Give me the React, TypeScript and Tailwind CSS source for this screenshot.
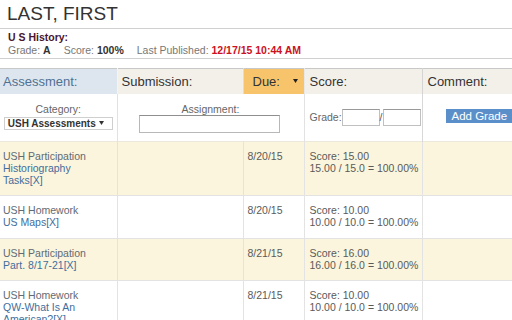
import React from "react";

const rows = [
  { cat: "USH Participation", name: ["Historiography", "Tasks[X]"], due: "8/20/15", score: "15.00", calc: "15.00 / 15.0 = 100.00%", bg: "bg-[#faf5dc]", h: "h-[54px]" },
  { cat: "USH Homework", name: ["US Maps[X]"], due: "8/20/15", score: "10.00", calc: "10.00 / 10.0 = 100.00%", bg: "bg-white", h: "h-[43px]" },
  { cat: "USH Participation", name: ["Part. 8/17-21[X]"], due: "8/21/15", score: "16.00", calc: "16.00 / 16.0 = 100.00%", bg: "bg-[#faf5dc]", h: "h-[42px]" },
  { cat: "USH Homework", name: ["QW-What Is An", "American?[X]"], due: "8/21/15", score: "10.00", calc: "10.00 / 10.0 = 100.00%", bg: "bg-white", h: "h-[54px]" },
];

export default function App() {
  return (
    <div className="w-[512px] h-[320px] overflow-hidden bg-white font-['Liberation_Sans',Arial,sans-serif]">
      <div className="pl-[7px] pt-[3px] pb-[3px] border-b border-[#d0d0d0] text-[19px] leading-[22px] text-[#333]">
        LAST, FIRST
      </div>
      <div className="pl-[8px] pt-[2px] pb-[1px] border-b border-[#d0d0d0] text-[10.5px] leading-[13px]">
        <div className="font-bold text-[#4a1530]">U S History:</div>
        <div className="flex gap-[13px] text-[#777]">
          <span>
            Grade: <b className="text-[#333]">A</b>
          </span>
          <span>
            Score: <b className="text-[#333]">100%</b>
          </span>
          <span>
            Last Published: <b className="text-[#cc1122]">12/17/15 10:44 AM</b>
          </span>
        </div>
      </div>
      <table className="mt-[9px] table-fixed border-collapse w-[542px] text-[10.5px] leading-[12px]">
        <colgroup>
          <col className="w-[117px]" />
          <col className="w-[126px]" />
          <col className="w-[61px]" />
          <col className="w-[118px]" />
          <col className="w-[120px]" />
        </colgroup>
        <thead>
          <tr className="h-[25px] border-t border-[#c8c8c8] text-[13px] leading-[15px]">
            <th className="bg-[#dde6ef] text-[#4f7193] font-normal text-left pl-[3px] border-r border-[#f4f4f4]">Assessment:</th>
            <th className="bg-[#f3f0ea] text-[#333] font-normal text-left pl-[4px] border-r border-[#e0ddd6]">Submission:</th>
            <th className="bg-[#f7c46c] text-[#333] font-normal text-left pl-[9px] pr-[6px] border-r border-[#e8e8e8]">
              <div className="flex items-center justify-between">
                <span>Due:</span>
                <svg width="5" height="4" viewBox="0 0 5 4">
                  <path d="M0 0H5L2.5 4Z" fill="#222" />
                </svg>
              </div>
            </th>
            <th className="bg-[#f3f0ea] text-[#333] font-normal text-left pl-[5px] border-r border-[#d4d4d4]">Score:</th>
            <th className="bg-[#f3f0ea] text-[#333] font-normal text-left pl-[5px]">Comment:</th>
          </tr>
        </thead>
        <tbody>
          <tr className="h-[48px] border-b border-[#ece8dc]">
            <td className="border-r border-[#e2e2e2] align-top pt-[9px]">
              <div className="flex flex-col items-center">
                <div className="text-[#666]">Category:</div>
                <div className="mt-[2px] w-[109px] h-[13px] border border-[#cfcfcf] flex items-center justify-between pl-[3px] pr-[8px] font-bold text-[#333] text-[10px] leading-[11px] whitespace-nowrap">
                  <span>USH Assessments</span>
                  <svg width="5" height="4" viewBox="0 0 5 4">
                    <path d="M0 0H5L2.5 4Z" fill="#333" />
                  </svg>
                </div>
              </div>
            </td>
            <td colSpan={2} className="border-r border-[#e2e2e2] align-top pt-[9px]">
              <div className="flex flex-col items-center">
                <div className="text-[#666]">Assignment:</div>
                <div className="ml-[-3px] w-[141px] h-[18px] border border-[#b8b8b8] border-t-[#8f8f8f] bg-white" />
              </div>
            </td>
            <td className="border-r border-[#d8d8d8] align-middle pl-[5px]">
              <div className="flex items-center text-[#666]">
                <span>Grade:</span>
                <div className="w-[38px] h-[17px] border border-[#c0c0c0] border-t-[#999] bg-white" />
                <span className="text-[#555]">/</span>
                <div className="w-[38px] h-[17px] border border-[#c0c0c0] border-t-[#999] bg-white" />
              </div>
            </td>
            <td className="align-middle pl-[23px]">
              <div className="mt-[-2px] w-[78px] h-[14px] bg-[#5b8fca] text-white text-[11.5px] leading-[14px] pl-[6px]">
                Add Grade
              </div>
            </td>
          </tr>
          {rows.map((r, i) => (
            <tr key={i} className={`${r.bg} ${r.h} border-b border-[#e3e3e3]`}>
              <td className="align-top pt-[8px] pl-[3px] border-r border-[#e3e3e3]">
                <div className="text-[#626a74]">{r.cat}</div>
                {r.name.map((n, j) => (
                  <div key={j} className="text-[#436d9c]">{n}</div>
                ))}
              </td>
              <td className="border-r border-[#e3e3e3]" />
              <td className="align-top pt-[8px] pl-[4px] text-[#5a5a5a] border-r border-[#e3e3e3]">{r.due}</td>
              <td className="align-top pt-[8px] pl-[5px] text-[#5a5a5a] border-r border-[#e3e3e3]">
                <div>Score: {r.score}</div>
                <div>{r.calc}</div>
              </td>
              <td />
            </tr>
          ))}
        </tbody>
      </table>
    </div>
  );
}
